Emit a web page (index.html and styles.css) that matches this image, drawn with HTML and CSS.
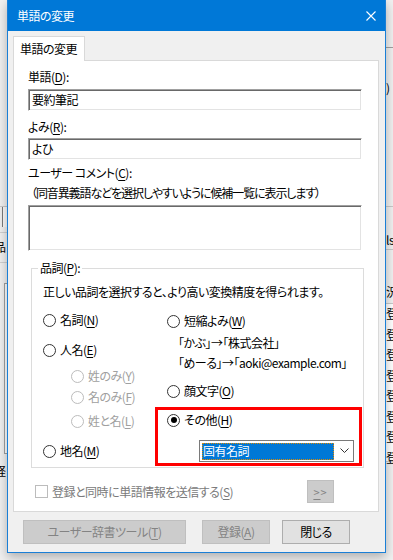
FILE: index.html
```html
<!DOCTYPE html>
<html lang="ja">
  <head>
    <meta charset="UTF-8" />
    <title>単語の変更</title>
    <link rel="stylesheet" href="styles.css">
  </head>

  <body>
    <div class="screen">
      <div class="backdrop backdrop-left">
        <div class="bl-top"></div>
        <div class="bl-field"></div>
        <div class="bl-tab">品</div>
        <div class="bl-list"></div>
        <div class="bl-text">経</div>
      </div>

      <div class="dialog">
        <div class="titlebar">
          <span class="title">単語の変更</span>
          <svg class="close" width="10" height="10" viewBox="0 0 10 10">
            <path d="M0.5 0.5 L9.5 9.5 M9.5 0.5 L0.5 9.5" stroke="#fff" stroke-width="1.1" fill="none" />
          </svg>
        </div>

        <div class="dialog-body">
          <div class="tabs">
            <div class="tab">単語の変更</div>
          </div>

          <div class="tab-panel">
            <div class="field-label label-word">単語(<u>D</u>):</div>
            <div class="textbox textbox-word">要約筆記</div>

            <div class="field-label label-yomi">よみ(<u>R</u>):</div>
            <div class="textbox textbox-yomi">よひ</div>

            <div class="field-label label-comment">ユーザー コメント(<u>C</u>):</div>
            <div class="hint">（同音異義語などを選択しやすいように候補一覧に表示します）</div>
            <div class="textbox textarea"></div>

            <fieldset class="group">
              <legend>品詞(<u>P</u>):</legend>
              <div class="group-inner">
                <div class="group-desc">正しい品詞を選択すると、より高い変換精度を得られます。</div>
                <div class="columns">
                  <div class="col-left">
                    <div class="radio r-noun"><span class="dot"></span><span>名詞(<u>N</u>)</span></div>
                    <div class="radio r-person"><span class="dot"></span><span>人名(<u>E</u>)</span></div>
                    <div class="radio sub disabled r-sei"><span class="dot"></span><span>姓のみ(<u>Y</u>)</span></div>
                    <div class="radio sub disabled r-mei"><span class="dot"></span><span>名のみ(<u>F</u>)</span></div>
                    <div class="radio sub disabled r-both"><span class="dot"></span><span>姓と名(<u>L</u>)</span></div>
                    <div class="radio r-place"><span class="dot"></span><span>地名(<u>M</u>)</span></div>
                  </div>
                  <div class="col-right">
                    <div class="radio r-short"><span class="dot"></span><span>短縮よみ(<u>W</u>)</span></div>
                    <div class="example ex-1">「かぶ」→「株式会社」</div>
                    <div class="example ex-2">「めーる」→「aoki@example.com」</div>
                    <div class="radio r-face"><span class="dot"></span><span>顔文字(<u>O</u>)</span></div>
                    <div class="highlight-box">
                      <div class="radio checked"><span class="dot"></span><span>その他(<u>H</u>)</span></div>
                      <div class="dropdown">
                        <span class="dropdown-value">固有名詞</span>
                        <svg class="chevron" width="9" height="6" viewBox="0 0 9 6">
                          <path d="M0.5 0.5 L4.5 4.5 L8.5 0.5" stroke="#333" stroke-width="1" fill="none" />
                        </svg>
                      </div>
                    </div>
                  </div>
                </div>
              </div>
            </fieldset>

            <div class="send-row">
              <span class="checkbox"></span>
              <span class="send-label">登録と同時に単語情報を送信する(<u>S</u>)</span>
              <button class="btn btn-more" disabled><u>&gt;</u>&gt;</button>
            </div>
          </div>

          <div class="buttons">
            <button class="btn btn-tool" disabled>ユーザー辞書ツール(<u>T</u>)</button>
            <button class="btn btn-add" disabled>登録(<u>A</u>)</button>
            <button class="btn btn-close">閉じる</button>
          </div>
        </div>
      </div>

      <div class="backdrop backdrop-right">
        <div class="br-top"></div>
        <div class="br-head">)</div>
        <div class="br-mid"></div>
        <div class="br-cell">ls</div>
        <div class="br-gap"></div>
        <div class="br-colhead">況</div>
        <div class="br-rows">
          <div>登</div>
          <div>登</div>
          <div>登</div>
          <div>登</div>
          <div>登</div>
          <div>登</div>
          <div>登</div>
          <div>登</div>
        </div>
      </div>
    </div>
  </body>
</html>
```

FILE: styles.css
```css
* {
  box-sizing: border-box;
}

body {
  margin: 0;
  background-color: #f0f0f0;
  font-family: "Noto Sans CJK JP", "Noto Sans", sans-serif;
  font-size: 12px;
  line-height: 16px;
  letter-spacing: -0.5px;
  color: #000;
  font-feature-settings: "palt";
}

u {
  text-decoration-thickness: 1px;
  text-underline-offset: 2px;
}

.screen {
  display: flex;
  height: 560px;
  overflow: hidden;
}

/* window behind the dialog */
.backdrop {
  width: 7px;
  flex: none;
  overflow: hidden;
  white-space: nowrap;
}

.bl-top {
  height: 207px;
  border-bottom: 1px solid #c8c8c8;
}

.bl-field {
  height: 20px;
  margin-left: 2px;
  border-left: 1px solid #7a7a7a;
  background-color: #fafafa;
}

.bl-tab {
  height: 31px;
  margin-top: 5px;
  padding-top: 6px;
  border-top: 1px solid #d0d0d0;
  border-bottom: 1px solid #d0d0d0;
  text-indent: -6px;
}

.bl-list {
  height: 171px;
  margin-top: 20px;
  margin-left: 4px;
  border: 1px solid #a0a0a0;
  border-right: none;
  background-color: #fff;
}

.bl-text {
  margin-top: 9px;
  text-indent: -6px;
}

.br-top {
  height: 48px;
  border-bottom: 1px solid #a0a0a0;
}

.br-head {
  height: 159px;
  padding-top: 32px;
  border-bottom: 1px solid #c8c8c8;
}

.br-mid {
  height: 25px;
}

.br-cell {
  height: 18px;
  border-bottom: 1px solid #c8c8c8;
}

.br-gap {
  height: 34px;
}

.br-colhead {
  height: 20px;
  border-bottom: 1px solid #c8c8c8;
}

.br-rows {
  height: 158px;
  background-color: #fff;
  border-bottom: 1px solid #c8c8c8;
}

.br-rows div {
  height: 20.5px;
  line-height: 20px;
}

/* dialog */
.dialog {
  position: relative;
  z-index: 1;
  width: 379px;
  height: 553px;
  flex: none;
  border: 1px solid #1a7fd6;
  border-top: none;
  background-color: #f0f0f0;
  box-shadow: 0 4px 10px rgba(0, 0, 0, 0.28);
}

.titlebar {
  height: 31px;
  padding: 0 9px;
  display: flex;
  align-items: center;
  justify-content: space-between;
  background-color: #0078d7;
  color: #fff;
}

.dialog-body {
  padding: 5px 6px 8px 5px;
}

.tabs {
  display: flex;
}

.tab {
  position: relative;
  z-index: 1;
  width: 72px;
  height: 25px;
  margin-bottom: -1px;
  padding: 4px 0 0 6px;
  border: 1px solid #d9d9d9;
  border-bottom: none;
  background-color: #fff;
}

.tab-panel {
  height: 452px;
  padding: 8px 15px 0 14px;
  border: 1px solid #d9d9d9;
  background-color: #fff;
}

.field-label {
  height: 16px;
}

.label-yomi {
  margin-top: 8px;
}

.label-comment {
  margin-top: 5px;
}

.textbox {
  width: 334px;
  height: 22px;
  padding: 2px 0 0 3px;
  border: 1px solid;
  border-color: #a0a0a0 #fff #fff #a0a0a0;
  box-shadow: inset 1px 1px 0 #696969, inset -1px -1px 0 #e3e3e3;
  background-color: #fff;
}

.textbox-word {
  margin-top: 4px;
}

.textbox-yomi {
  margin-top: 3px;
}

.hint {
  margin-top: 4px;
  margin-left: 3px;
  letter-spacing: -1.1px;
}

.textarea {
  height: 46px;
  margin-top: 4px;
}

/* part of speech group */
.group {
  width: 333px;
  margin: 9px 0 0 3px;
  padding: 0;
  border: 1px solid #dcdcdc;
}

.group legend {
  margin-left: 6px;
  padding: 0 2px;
  line-height: 16px;
}

.group-inner {
  padding: 8px 0 1px 11px;
}

.columns {
  display: flex;
}

.col-left {
  width: 124px;
  flex: none;
}

.col-right {
  flex: 1;
}

.radio {
  height: 16px;
  display: flex;
  align-items: center;
  gap: 4px;
}

.radio .dot {
  position: relative;
  width: 13px;
  height: 13px;
  flex: none;
  border: 1px solid #333;
  border-radius: 50%;
  background-color: #fff;
}

.radio.checked .dot::after {
  content: "";
  position: absolute;
  left: 2.5px;
  top: 2.5px;
  width: 6px;
  height: 6px;
  border-radius: 50%;
  background-color: #000;
}

.radio.disabled {
  color: #a0a0a0;
}

.radio.disabled .dot {
  border-color: #bcbcbc;
}

.radio.sub {
  margin-left: 28px;
}

.r-noun { margin-top: 12px; }
.r-person { margin-top: 14px; }
.r-sei { margin-top: 10px; }
.r-mei { margin-top: 5px; }
.r-both { margin-top: 8px; }
.r-place { margin-top: 14px; }

.r-short { margin-top: 13px; }
.r-face { margin-top: 12px; }

.example {
  padding-left: 11px;
}

.ex-1 { margin-top: 6px; }
.ex-2 { margin-top: 4px; }

.highlight-box {
  width: 207px;
  margin: 8px 0 0 -12px;
  padding: 2px 0 1px 9px;
  border: 3px solid #f00;
}

.dropdown {
  width: 155px;
  height: 22px;
  margin: 12px 0 0 32px;
  padding: 2px 0 2px 2px;
  display: flex;
  align-items: center;
  border: 1px solid #7a7a7a;
  background-color: #fff;
}

.dropdown-value {
  flex: 1;
  height: 17px;
  padding-left: 1px;
  line-height: 16px;
  background-color: #0078d7;
  color: #fff;
  outline: 1px dotted #e08a00;
  outline-offset: -1px;
}

.chevron {
  margin: 0 4px 0 6px;
}

/* bottom of tab page */
.send-row {
  width: 306px;
  height: 23px;
  margin-top: 12px;
  padding-left: 7px;
  display: flex;
  align-items: center;
}

.checkbox {
  width: 13px;
  height: 13px;
  border: 1px solid #bcbcbc;
  background-color: #fff;
}

.send-label {
  margin-left: 4px;
  color: #7a7a7a;
}

.btn {
  height: 24px;
  padding: 0;
  font: inherit;
  line-height: 16px;
  letter-spacing: -0.5px;
  color: #000;
  border: 1px solid #adadad;
  background-color: #e1e1e1;
}

.btn:disabled {
  color: #838383;
  border-color: #bfbfbf;
  background-color: #cccccc;
}

.btn-more {
  width: 27px;
  height: 23px;
  margin-left: auto;
  font-size: 11px;
  letter-spacing: 1px;
}

.buttons {
  margin-top: 8px;
  padding-left: 10px;
  display: flex;
}

.btn-tool {
  width: 163px;
}

.btn-add {
  width: 68px;
  margin-left: 16px;
}

.btn-close {
  width: 68px;
  margin-left: 12px;
}
```
